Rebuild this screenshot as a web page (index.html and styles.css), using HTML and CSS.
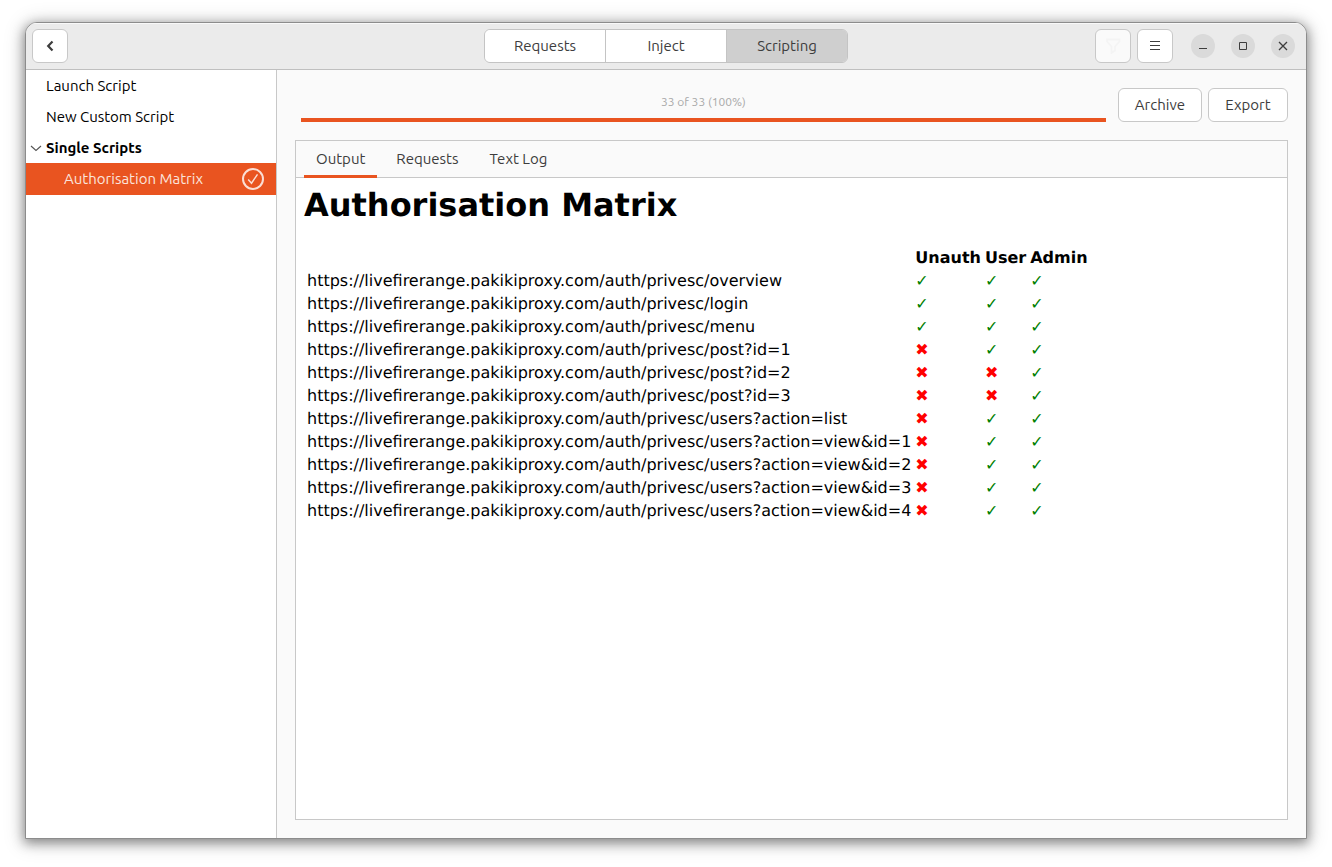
FILE: index.html
```html
<!DOCTYPE html>
<html lang="en">
<head>
<meta charset="utf-8">
<title>Scripting</title>
<link rel="stylesheet" href="styles.css">
</head>
<body>
<div class="window">
  <header class="headerbar">
    <div class="header-start">
      <button class="button icon-button" type="button" aria-label="Back">
        <svg width="16" height="16" viewBox="0 0 16 16"><path d="M10.500 3.500L6.200 8L10.500 12.500" fill="none" stroke="#3d3d3d" stroke-width="2.200"/></svg>
      </button>
    </div>
    <nav class="switcher" aria-label="Sections">
      <button class="switch" type="button">Requests</button>
      <button class="switch" type="button">Inject</button>
      <button class="switch switch-active" type="button" aria-pressed="true">Scripting</button>
    </nav>
    <div class="header-end">
      <button class="button icon-button icon-button-disabled" type="button" aria-label="Filter" disabled>
        <svg width="16" height="16" viewBox="0 0 16 16"><path d="M2 1.500H14.500V3.500L10 8.500V12.500L6.500 15V8.500L2 3.500Z" fill="none" stroke="#f4f4f4" stroke-width="1.800"/></svg>
      </button>
      <button class="button icon-button" type="button" aria-label="Menu">
        <svg width="16" height="16" viewBox="0 0 16 16"><path d="M3 3.500H13M3 7.500H13M3 11.500H13" fill="none" stroke="#3d3d3d"/></svg>
      </button>
      <div class="window-controls">
        <button class="control" type="button" aria-label="Minimize">
          <svg width="16" height="16" viewBox="0 0 16 16"><path d="M4 10.500H12" fill="none" stroke="#3d3d3d"/></svg>
        </button>
        <button class="control" type="button" aria-label="Maximize">
          <svg width="16" height="16" viewBox="0 0 16 16"><path d="M4.500 4.500H11.500V11.500H4.500Z" fill="none" stroke="#3d3d3d"/></svg>
        </button>
        <button class="control" type="button" aria-label="Close">
          <svg width="16" height="16" viewBox="0 0 16 16"><path d="M4 4L12 12M12 4L4 12" fill="none" stroke="#3d3d3d" stroke-width="1.300"/></svg>
        </button>
      </div>
    </div>
  </header>
  <div class="content">
    <nav class="sidebar" aria-label="Scripts">
      <button class="item" type="button">Launch Script</button>
      <button class="item" type="button">New Custom Script</button>
      <button class="item item-group" type="button" aria-expanded="true">
        <svg class="expander" width="12" height="12" viewBox="0 0 12 12"><path d="M1 4L6 8.500L11 4" fill="none" stroke="#555" stroke-width="1.100"/></svg>
        Single Scripts
      </button>
      <button class="item item-selected" type="button">
        <span>Authorisation Matrix</span>
        <svg width="24" height="24" viewBox="0 0 24 24"><circle cx="12" cy="12" r="10" fill="none" stroke="#fbded4" stroke-width="2"/><path d="M7.200 12.500L10.500 16.200L16.500 7.300" fill="none" stroke="#fbded4" stroke-width="1.500"/></svg>
      </button>
    </nav>
    <main class="main">
      <div class="toolbar">
        <div class="progress">
          <label for="run-progress">33 of 33 (100%)</label>
          <progress id="run-progress" value="33" max="33"></progress>
        </div>
        <div class="actions">
          <button class="button text-button" type="button">Archive</button>
          <button class="button text-button" type="button">Export</button>
        </div>
      </div>
      <section class="notebook">
        <div class="tabs" role="tablist">
          <button class="tab tab-active" type="button" role="tab" aria-selected="true">Output</button>
          <button class="tab" type="button" role="tab">Requests</button>
          <button class="tab" type="button" role="tab">Text Log</button>
        </div>
        <div class="output">
          <h1>Authorisation Matrix</h1>
          <table>
            <thead>
              <tr><th></th><th>Unauth</th><th>User</th><th>Admin</th></tr>
            </thead>
            <tbody>
              <tr><td>https://livefirerange.pakikiproxy.com/auth/privesc/overview</td><td class="yes">✓</td><td class="yes">✓</td><td class="yes">✓</td></tr>
              <tr><td>https://livefirerange.pakikiproxy.com/auth/privesc/login</td><td class="yes">✓</td><td class="yes">✓</td><td class="yes">✓</td></tr>
              <tr><td>https://livefirerange.pakikiproxy.com/auth/privesc/menu</td><td class="yes">✓</td><td class="yes">✓</td><td class="yes">✓</td></tr>
              <tr><td>https://livefirerange.pakikiproxy.com/auth/privesc/post?id=1</td><td class="no">✖</td><td class="yes">✓</td><td class="yes">✓</td></tr>
              <tr><td>https://livefirerange.pakikiproxy.com/auth/privesc/post?id=2</td><td class="no">✖</td><td class="no">✖</td><td class="yes">✓</td></tr>
              <tr><td>https://livefirerange.pakikiproxy.com/auth/privesc/post?id=3</td><td class="no">✖</td><td class="no">✖</td><td class="yes">✓</td></tr>
              <tr><td>https://livefirerange.pakikiproxy.com/auth/privesc/users?action=list</td><td class="no">✖</td><td class="yes">✓</td><td class="yes">✓</td></tr>
              <tr><td>https://livefirerange.pakikiproxy.com/auth/privesc/users?action=view&amp;id=1</td><td class="no">✖</td><td class="yes">✓</td><td class="yes">✓</td></tr>
              <tr><td>https://livefirerange.pakikiproxy.com/auth/privesc/users?action=view&amp;id=2</td><td class="no">✖</td><td class="yes">✓</td><td class="yes">✓</td></tr>
              <tr><td>https://livefirerange.pakikiproxy.com/auth/privesc/users?action=view&amp;id=3</td><td class="no">✖</td><td class="yes">✓</td><td class="yes">✓</td></tr>
              <tr><td>https://livefirerange.pakikiproxy.com/auth/privesc/users?action=view&amp;id=4</td><td class="no">✖</td><td class="yes">✓</td><td class="yes">✓</td></tr>
            </tbody>
          </table>
        </div>
      </section>
    </main>
  </div>
</div>
</body>
</html>
```
FILE: styles.css
```css
* {
  box-sizing: border-box;
}

body {
  display: flex;
  min-height: 100vh;
  margin: 0;
  padding: 22px 25px 28px;
  background: #fff;
  color: #000;
  font: 15px/20px Ubuntu, "Noto Sans", sans-serif;
}

button {
  margin: 0;
  font: inherit;
}

svg {
  display: block;
  flex: none;
}

.window {
  display: flex;
  flex: 1;
  flex-direction: column;
  min-width: 0;
  overflow: hidden;
  border: 1px solid #8c8c8c;
  border-radius: 12px 12px 0 0;
  background: #fafafa;
  box-shadow: 0 3px 12px 1px rgba(0, 0, 0, 0.42), 0 2px 20px 4px rgba(0, 0, 0, 0.12);
}

.headerbar {
  display: grid;
  grid-template-columns: 1fr auto 1fr;
  align-items: center;
  height: 47px;
  padding: 0 6px;
  border-bottom: 1px solid #bfbfbf;
  background: #ebebeb;
  box-shadow: inset 0 1px #f9f9f9;
}

.header-start,
.header-end {
  display: flex;
  align-items: center;
  gap: 6px;
}

.header-end {
  justify-content: flex-end;
}

.button {
  display: flex;
  align-items: center;
  justify-content: center;
  height: 34px;
  border: 1px solid #c8c8c8;
  border-radius: 6px;
  background: #fff;
  color: #3d3d3d;
}

.icon-button {
  width: 36px;
  padding: 0;
}

.icon-button-disabled {
  background: #fafafa;
}

.text-button {
  min-width: 80px;
  padding: 0 16px;
}

.switcher {
  display: flex;
  overflow: hidden;
  border: 1px solid #c4c4c4;
  border-radius: 6px;
}

.switch {
  width: 121px;
  height: 32px;
  padding: 0;
  border: 0;
  border-right: 1px solid #c4c4c4;
  background: #fff;
  color: #3d3d3d;
}

.switch-active {
  width: 120px;
  border-right: 0;
  background: #cfcfcf;
}

.window-controls {
  display: flex;
  gap: 16px;
  padding: 0 5px 0 12px;
}

.control {
  display: grid;
  place-items: center;
  width: 24px;
  height: 24px;
  padding: 0;
  border: 0;
  border-radius: 50%;
  background: #dadada;
}

.content {
  display: flex;
  flex: 1;
}

.sidebar {
  display: flex;
  flex: none;
  flex-direction: column;
  width: 251px;
  border-right: 1px solid #c8c8c8;
  background: #fff;
}

.item {
  display: flex;
  align-items: center;
  height: 31px;
  padding: 0 12px 0 20px;
  border: 0;
  background: none;
  color: #000;
  text-align: left;
}

.item-group {
  gap: 4px;
  padding-left: 4px;
  font-weight: bold;
}

.item-selected {
  justify-content: space-between;
  height: 32px;
  padding-left: 38px;
  padding-right: 11px;
  background: #e95420;
  color: #fbe4dc;
}

.main {
  display: flex;
  flex: 1;
  flex-direction: column;
  gap: 18px;
  min-width: 0;
  padding: 18px;
}

.toolbar {
  display: flex;
  gap: 12px;
  padding-left: 6px;
}

.progress {
  display: flex;
  flex: 1;
  flex-direction: column;
  justify-content: flex-end;
  gap: 8px;
  color: #a9a9a9;
  font-size: 12px;
  line-height: 16px;
  text-align: center;
}

progress {
  width: 100%;
  height: 4px;
  border: 0;
  border-radius: 1px;
  appearance: none;
  background: #e95420;
}

progress::-webkit-progress-bar,
progress::-webkit-progress-value {
  border-radius: 1px;
  background: #e95420;
}

.actions {
  display: flex;
  gap: 6px;
}

.notebook {
  display: flex;
  flex: 1;
  flex-direction: column;
  border: 1px solid #c8c8c8;
  background: #fff;
}

.tabs {
  display: flex;
  gap: 7px;
  padding-left: 8px;
  background: #fafafa;
  box-shadow: inset 0 -1px #c8c8c8;
}

.tab {
  height: 37px;
  padding: 2px 12px 0;
  border: 0;
  border-bottom: 3px solid transparent;
  background: none;
  color: #3d3d3d;
}

.tab-active {
  border-bottom-color: #e95420;
}

.output {
  flex: 1;
  padding: 9px 8px 8px;
  font: 16px/19px "DejaVu Sans", sans-serif;
  text-rendering: geometricPrecision;
}

.output h1 {
  margin: 0 0 21px;
  font-size: 32px;
  line-height: 37px;
}

.output th {
  text-align: left;
}

.yes {
  color: #008000;
}

.no {
  color: #f00;
}
```
